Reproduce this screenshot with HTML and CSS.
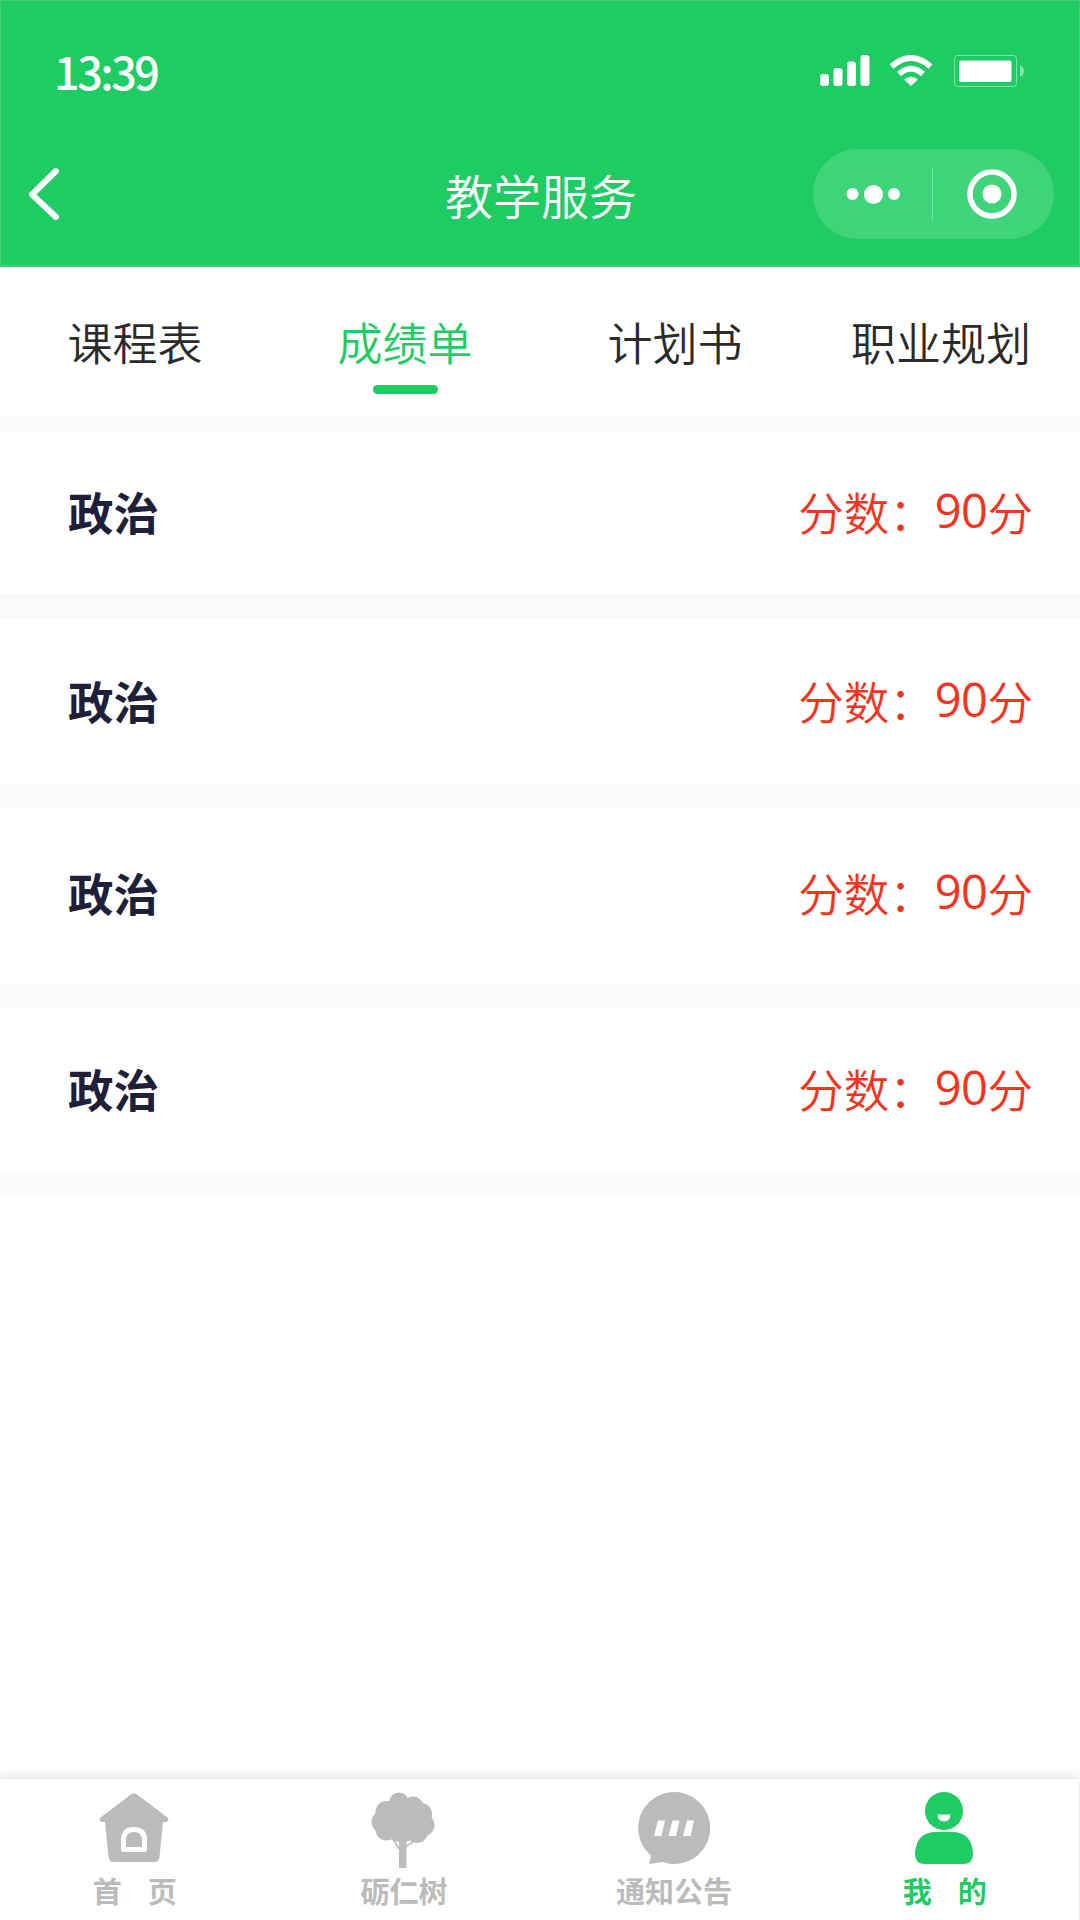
FILE: index.html
```
<!DOCTYPE html>
<html lang="zh-CN">
<head>
	<meta charset="UTF-8">
	<meta name="viewport" content="width=device-width, initial-scale=1.0">
	<title>教学服务</title>
	<link rel="stylesheet" href="styles.css">
</head>
<body>
	<div class="page">
		<header class="header">
			<div class="status">
				<span class="time">13:39</span>
				<svg class="status-icons" width="206" height="34" viewBox="0 0 206 34">
					<g fill="#fff">
						<rect x="0" y="20" width="9" height="12" rx="3"/>
						<rect x="13.5" y="14" width="9" height="18" rx="3"/>
						<rect x="27" y="7.5" width="9" height="24.5" rx="3"/>
						<rect x="40.5" y="1" width="9" height="31" rx="3"/>
						<path d="M91 32 L84 25.5 Q91 20 98 25.5 Z"/>
					</g>
					<g fill="none" stroke="#fff" stroke-width="6">
						<path d="M71.5 12.4 Q91 -4.4 110.5 12.4"/>
						<path d="M79 20 Q91 9.5 103 20"/>
					</g>
					<rect x="134.5" y="1.5" width="62" height="31" rx="3" fill="none" stroke="#fff" stroke-opacity=".45"/>
					<rect x="139" y="6.5" width="52.5" height="21.5" rx="2" fill="#fff"/>
					<path d="M200 11 Q204 13 204 17 Q204 21 200 23 Z" fill="#fff" fill-opacity=".45"/>
				</svg>
			</div>
			<div class="nav">
				<svg class="back" width="32" height="54" viewBox="0 0 32 54">
					<path d="M28 4 L4 27.5 L28 50" fill="none" stroke="#fff" stroke-width="6" stroke-linecap="round" stroke-linejoin="round"/>
				</svg>
				<h1 class="title">教学服务</h1>
				<div class="capsule">
					<svg width="241" height="90" viewBox="0 0 241 90">
						<g fill="#fff">
							<circle cx="39.5" cy="45" r="6"/>
							<circle cx="60.5" cy="45.5" r="9.5"/>
							<circle cx="81" cy="45" r="6"/>
							<circle cx="179" cy="45" r="9.5"/>
						</g>
						<circle cx="179" cy="45" r="22" fill="none" stroke="#fff" stroke-width="5.5"/>
						<path d="M119.5 19 V72" stroke="#fff" stroke-opacity=".3"/>
					</svg>
				</div>
			</div>
		</header>

		<nav class="tabs">
			<a class="tab">课程表</a>
			<a class="tab active">成绩单</a>
			<a class="tab">计划书</a>
			<a class="tab">职业规划</a>
		</nav>

		<ul class="scores">
			<li class="score"><b class="subject">政治</b><span class="point">分数：<i>90</i>分</span></li>
			<li class="score"><b class="subject">政治</b><span class="point">分数：<i>90</i>分</span></li>
			<li class="score"><b class="subject">政治</b><span class="point">分数：<i>90</i>分</span></li>
			<li class="score"><b class="subject">政治</b><span class="point">分数：<i>90</i>分</span></li>
		</ul>

		<footer class="tabbar">
			<a class="bar-item">
				<svg width="72" height="76" viewBox="0 0 72 76">
					<path d="M33 2.5 Q36 .5 39 2.5 L69.5 25.5 Q72 29 68 30 H65 L61.5 65 Q61 70 56 70 H16 Q11 70 10.5 65 L7 30 H4 Q0 29 2.5 25.5 Z" fill="currentColor"/>
					<path d="M25.5 57.5 V48 Q25.5 37.5 36 37.5 Q46.5 37.5 46.5 48 V57.5 Z" fill="none" stroke="#fff" stroke-width="5" stroke-linejoin="round"/>
				</svg>
				<span class="wide">首&emsp;页</span>
			</a>
			<a class="bar-item">
				<svg width="72" height="76" viewBox="0 0 72 76">
					<g fill="currentColor">
						<circle cx="31" cy="10.5" r="10"/>
						<circle cx="45" cy="15" r="10.5"/>
						<circle cx="18.5" cy="20" r="11"/>
						<circle cx="53" cy="22" r="11"/>
						<circle cx="14.5" cy="30" r="11"/>
						<circle cx="55.5" cy="33" r="11"/>
						<circle cx="18.5" cy="37.5" r="11"/>
						<circle cx="49" cy="40" r="11"/>
						<circle cx="34" cy="30" r="20"/>
						<rect x="31" y="45" width="7.5" height="31"/>
					</g>
					<path d="M25 47 L32 58 M45 50 L37 55" stroke="currentColor" stroke-width="1.8"/>
				</svg>
				<span>砺仁树</span>
			</a>
			<a class="bar-item">
				<svg width="72" height="76" viewBox="0 0 72 76">
					<path d="M11 72 L13 63.6 A36 36 0 1 1 24.5 70.1 Z" fill="currentColor"/>
					<path d="M20 28.5 H27 L23.5 44 H16 Z M34.5 28.5 H41.5 L38 44 H30.5 Z M49 28.5 H56 L52.5 44 H45 Z" fill="#fff"/>
				</svg>
				<span>通知公告</span>
			</a>
			<a class="bar-item active">
				<svg width="72" height="76" viewBox="0 0 72 76">
					<circle cx="36" cy="19" r="19" fill="currentColor"/>
					<path d="M29.5 22.5 H42.5 Q42 29.5 36 29.5 Q30 29.5 29.5 22.5 Z" fill="#fff"/>
					<path d="M7 62 Q8 40 28 40 H44 Q64 40 65 62 Q65 72 55 72 H17 Q7 72 7 62 Z" fill="currentColor"/>
				</svg>
				<span class="wide">我&emsp;的</span>
			</a>
		</footer>
	</div>
</body>
</html>
```
FILE: styles.css
```
*{
	box-sizing: border-box;
}
body{
	margin: 0;
	font-family: "Noto Sans CJK SC", sans-serif;
	background-color: #fff;
}
.page{
	display: flex; flex-direction: column;
	width: 1080px; height: 1920px;
	overflow: hidden;
}

/* 顶部 */
.header{
	height: 267px;
	background-color: #1fcb63;
	border: 1px solid #3fd27a;
	border-bottom-width: 2px;
	color: #fff;
}
.status{
	display: flex; justify-content: space-between;
	height: 148px;
	padding: 53px 53px 0 53px;
}
.time{
	height: 34px; line-height: 34px;
	font-size: 45px; font-weight: 500;
	letter-spacing: -2.5px;
}
.nav{
	display: grid; grid-template-columns: 241px 1fr 241px;
	height: 90px;
	align-items: center;
	padding: 0 25px 0 27px;
}
.title{
	margin: 0;
	text-align: center;
	font-size: 48px; font-weight: 350; line-height: 88px;
}
.capsule{
	height: 90px;
	border-radius: 45px;
	background-color: #3fd47a;
}
svg{
	display: block;
}

/* 标签 */
.tabs{
	display: grid; grid-template-columns: 270px 270px 270px 262px;
	height: 166px;
	padding-top: 42px;
	border-bottom: 16px solid #fafafc;
}
.tab{
	display: flex; flex-direction: column; align-items: center;
	font-size: 45px; font-weight: 350; line-height: 66px;
	color: #2a2a2a;
}
.tab.active{
	color: #1fcb63;
}
.tab.active::after{
	content: "";
	width: 65px; height: 9px;
	margin-top: 10px;
	border-radius: 5px;
	background-color: #1fcb63;
}

/* 成绩 */
.scores{
	flex: 1;
	margin: 0; padding: 0;
	list-style: none;
}
.score{
	display: flex; justify-content: space-between; align-items: center;
	height: 185px;
	padding: 0 47px 6px 68px;
	border-bottom: 24px solid #fafafc;
	font-size: 45.5px; line-height: 66px;
}
.score:nth-child(2){
	height: 189px;
	padding-bottom: 2px;
}
.score:nth-child(3){
	height: 202px;
	padding-bottom: 8px;
}
.score:nth-child(4){
	height: 188px;
	padding-bottom: 7px;
}
.subject{
	font-weight: 700;
	color: #1e2039;
}
.point{
	display: flex;
	font-weight: 350;
	color: #f43420;
}
.point i{
	margin-top: -1px;
	font-family: "Open Sans", sans-serif;
	font-size: 47px; font-style: normal; font-weight: 400;
	letter-spacing: -.5px;
}

/* 底部导航 */
.tabbar{
	display: grid; grid-template-columns: repeat(4, 270px);
	height: 141px;
	margin: 0 1px 0 -1px;
	padding-top: 13px;
	box-shadow: 0 0 12px rgba(0, 0, 0, .18);
}
.bar-item{
	display: flex; flex-direction: column; align-items: center;
	font-size: 29px; font-weight: 700; line-height: 44px;
	color: #bbb;
}
.bar-item .wide{
	letter-spacing: -1.5px;
}
.bar-item.active{
	color: #1fcb63;
}
```
